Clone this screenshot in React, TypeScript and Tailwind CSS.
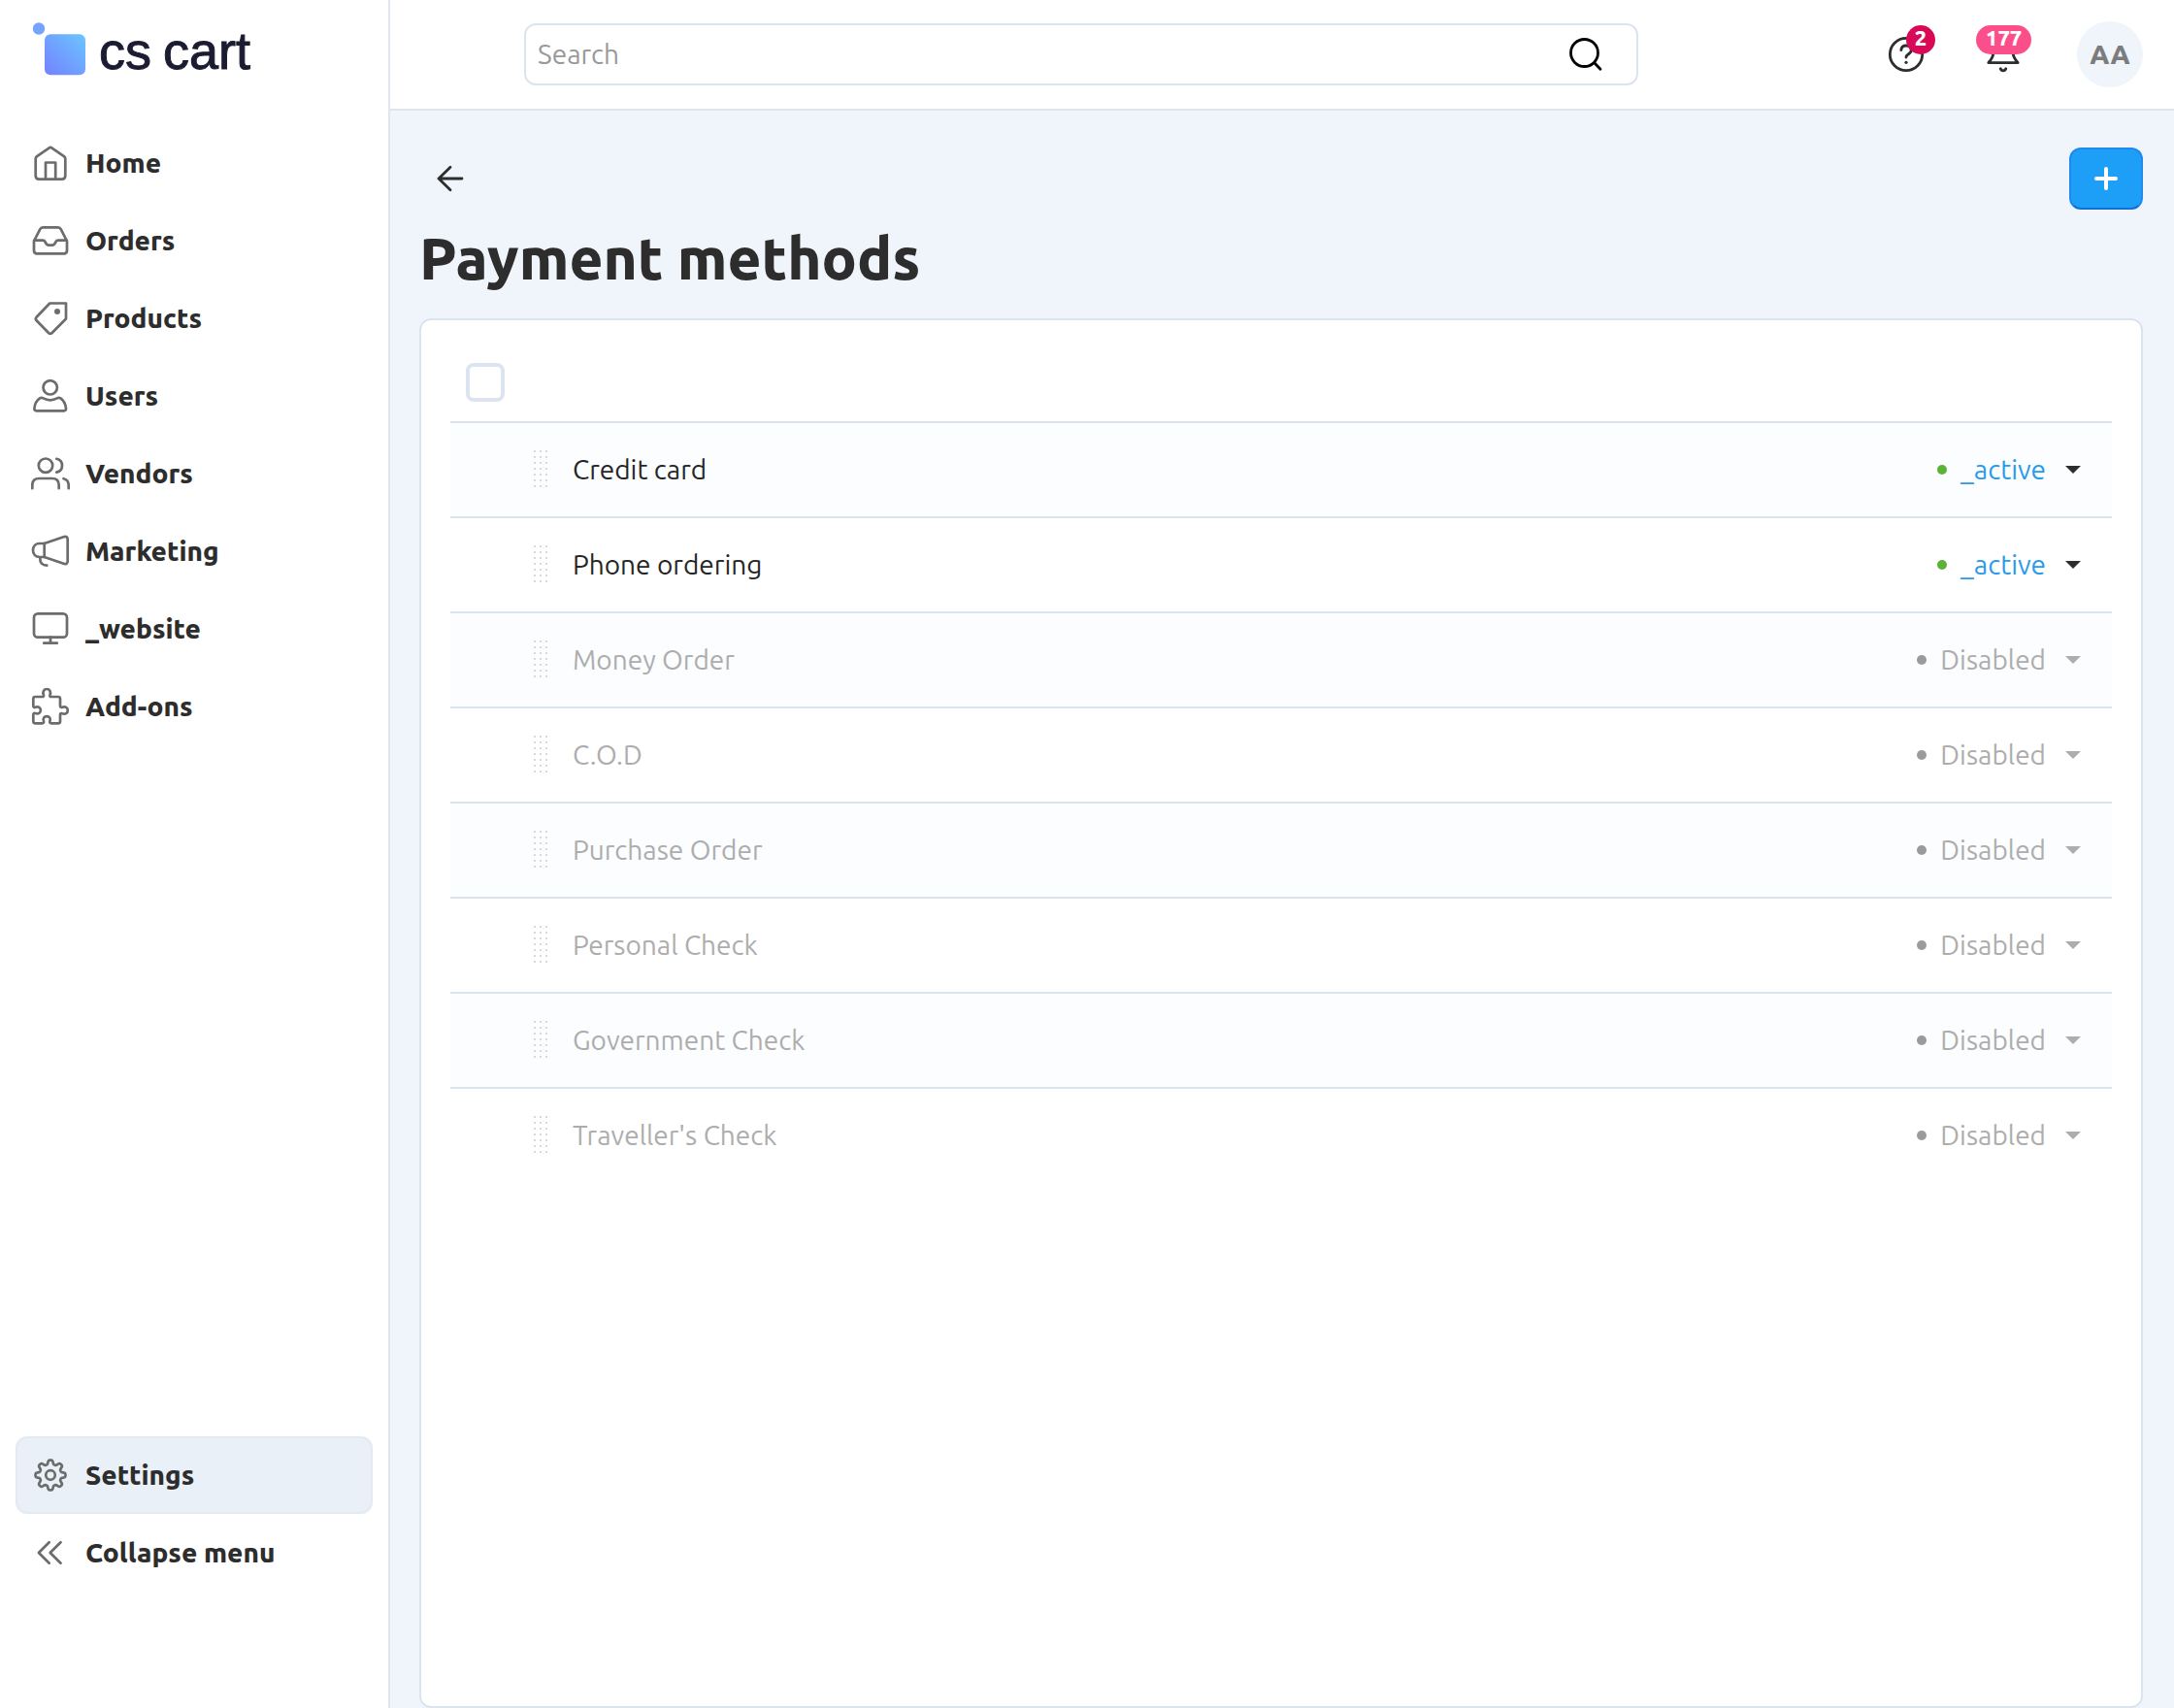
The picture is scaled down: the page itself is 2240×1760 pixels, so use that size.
import { useState } from 'react';
import type { ReactNode } from 'react';

type Status = 'active' | 'disabled';

const NAV_ITEMS = [
  { label: 'Home', icon: 'home' },
  { label: 'Orders', icon: 'orders' },
  { label: 'Products', icon: 'products' },
  { label: 'Users', icon: 'users' },
  { label: 'Vendors', icon: 'vendors' },
  { label: 'Marketing', icon: 'marketing' },
  { label: '_website', icon: 'website' },
  { label: 'Add-ons', icon: 'addons' },
];

const METHODS: { name: string; status: Status }[] = [
  { name: 'Credit card', status: 'active' },
  { name: 'Phone ordering', status: 'active' },
  { name: 'Money Order', status: 'disabled' },
  { name: 'C.O.D', status: 'disabled' },
  { name: 'Purchase Order', status: 'disabled' },
  { name: 'Personal Check', status: 'disabled' },
  { name: 'Government Check', status: 'disabled' },
  { name: "Traveller's Check", status: 'disabled' },
];

// eight rounded teeth around (20, 20)
const gearPath = () => {
  const points: string[] = [];
  for (let i = 0; i < 160; i++) {
    const a = (i / 160) * Math.PI * 2;
    const r = 13.4 + 2.1 * Math.tanh(1.8 * Math.cos(8 * a)) / Math.tanh(1.8);
    points.push(`${(20 + r * Math.cos(a)).toFixed(2)} ${(20 + r * Math.sin(a)).toFixed(2)}`);
  }
  return `M${points.join('L')}Z`;
};

const ICONS: Record<string, ReactNode> = {
  home: (
    <>
      <path d="M4.7 15.6c0-1.1.5-1.9 1.3-2.5L18.4 4.6c1-.8 2.2-.8 3.2 0L34 13.1c.8.6 1.3 1.4 1.3 2.5V33c0 2.3-1.3 3.7-3.6 3.7H8.3C6 36.7 4.7 35.3 4.7 33z" />
      <path d="M15 36.5v-17h10.2v17" />
    </>
  ),
  orders: (
    <>
      <path d="M3 20.5 9.3 8.2c.6-1.3 1.5-1.9 2.9-1.9h15.600c1.400 0 2.300.6 2.900 1.900L37 20.500v9.700c0 2-1.100 3.100-3.100 3.100H6.100c-2 0-3.100-1.100-3.100-3.100z" />
      <path d="M3.200 19.700h9c1 0 1.700.4 2.200 1.300l1.300 2.200c.6 1 1.200 1.400 2.300 1.400h4c1.100 0 1.700-.4 2.300-1.400l1.300-2.200c.5-.9 1.200-1.300 2.200-1.300h9" />
    </>
  ),
  products: (
    <>
      <path d="M19.300 4.500H36v16L21.600 35c-1.100 1-2.500 1-3.600 0L5.600 22.300c-1-1.100-1-2.400 0-3.500z" />
      <circle cx="27" cy="13" r="3" fill="currentColor" stroke="none" />
    </>
  ),
  users: (
    <>
      <circle cx="19.7" cy="11.3" r="7.2" />
      <path d="M3.400 33c.3-4.700 2.300-8.300 5.600-10.600 1.200-.7 2.300-.7 3.600 0 4.600 2.500 9.500 2.500 14.200 0 1.300-.7 2.400-.7 3.600 0 3.200 2.200 5.200 5.900 5.600 10.600.1 1.500-.6 2.300-2 2.300H5.400c-1.400 0-2.100-.8-2-2.300z" />
    </>
  ),
  vendors: (
    <>
      <circle cx="15" cy="11.7" r="7.2" />
      <path d="M1.300 35.200V32c0-4.700 2.300-7 7-7h13.400c4.700 0 7 2.300 7 7v3.200" />
      <path d="M26.300 4.800c3.600.8 5.700 3.300 5.700 6.900s-2.100 6.100-5.700 6.900M33.500 25.200c3.500.8 5.200 3.200 5.200 6.800v3.200" />
    </>
  ),
  marketing: (
    <>
      <path d="M13.700 12 33.500 5.200c2.600-.9 4.200.2 4.200 2.600v22.400c0 2.400-1.600 3.500-4.200 2.600L13.700 26H9c-4.300 0-7-2.900-7-7s2.700-7 7-7z" />
      <path d="M13.700 12v14M9.300 27.200c-.2 4.700 2.200 7.500 7 7.500" />
    </>
  ),
  website: (
    <>
      <rect x="3" y="4.3" width="34" height="24.4" rx="4" />
      <path d="M20 28.700v6M13.200 34.700h13.600" />
    </>
  ),
  addons: (
    <path d="M4.300 10h7.200c1.300 0 1.900-.9 1.400-2.100-1.300-3.400.5-5.900 3.300-5.900s4.600 2.500 3.300 5.900c-.5 1.200.1 2.100 1.400 2.100H28c1.300 0 2 .7 2 2v7.300c0 1.300.9 1.900 2.100 1.400 3.300-1.200 5.700.4 5.700 3.200s-2.400 4.500-5.700 3.300c-1.200-.5-2.100.1-2.100 1.400v6.700c0 1.300-.7 2-2 2h-7.100c-1.300 0-1.900-.8-1.500-2 1.100-3-.6-5.200-3.200-5.200s-4.300 2.200-3.200 5.200c.4 1.200-.2 2-1.500 2H4.300c-1.300 0-2-.7-2-2v-6.800c0-1.300.8-1.900 2-1.500 3.300 1.200 5.600-.5 5.600-3.200s-2.300-4.300-5.600-3.100c-1.200.4-2-.2-2-1.500V12c0-1.300.7-2 2-2z" />
  ),
  settings: (
    <>
      <path d={gearPath()} />
      <circle cx="20" cy="20" r="4.8" />
    </>
  ),
  collapse: <path d="M18.700 9.300 7.900 20l10.800 10.700M30.500 9.300 19.700 20l10.800 10.700" />,
};

function NavLink({ label, icon, active }: { label: string; icon: string; active?: boolean }) {
  return (
    <a
      href="#"
      className={`flex h-20 items-center gap-4 rounded-xl border-2 px-3.5 font-extrabold text-[#2d2d2d] ${
        active ? 'border-[#e4e9f3] bg-[#eaf0f8]' : 'border-transparent'
      }`}
    >
      <svg viewBox="0 0 40 40" fill="none" stroke="currentColor" strokeWidth="2.7" strokeLinecap="round" strokeLinejoin="round" className="size-10 shrink-0 text-[#6c6c6c]">
        {ICONS[icon]}
      </svg>
      {label}
    </a>
  );
}

function Logo() {
  return (
    <a href="#" className="ml-4 flex items-start gap-3.5">
      <svg viewBox="0 0 56 56" className="size-14">
        <defs>
          <linearGradient id="logo" x1="0" y1="1" x2="1" y2="0">
            <stop offset="0" stopColor="#7480ff" />
            <stop offset="1" stopColor="#6bc6ff" />
          </linearGradient>
        </defs>
        <circle cx="8" cy="7.5" r="6.2" fill="#76a3fd" />
        <rect x="14" y="13.3" width="42" height="42" rx="6" fill="url(#logo)" />
      </svg>
      <span className="flex gap-3 pt-0.5 font-['Liberation_Sans',sans-serif] text-[54px] leading-14 font-normal text-[#1b1b32] [-webkit-text-stroke:1px_#1b1b32]">
        <span>cs</span>
        <span>cart</span>
      </span>
    </a>
  );
}

function Grip() {
  return (
    <svg viewBox="0 0 14 40" fill="#d9d9d9" className="h-10 w-3.5">
      {[0, 6, 12, 18, 24, 30, 36].map((y) => [0, 6, 12].map((x) => <rect key={`${x}-${y}`} x={x} y={y} width="2" height="2" />))}
    </svg>
  );
}

function StatusButton({ status }: { status: Status }) {
  const active = status === 'active';
  return (
    <button type="button" aria-haspopup="menu" className="ml-auto flex items-center">
      <span className={`mr-3.5 size-2.5 rounded-full ${active ? 'bg-[#5bb236]' : 'bg-[#9b9b9b]'}`} />
      <span className={active ? 'text-[#2a9bea]' : 'text-[#adadad]'}>{active ? '_active' : 'Disabled'}</span>
      <svg viewBox="0 0 16 8" className={`ml-5 h-2 w-4 ${active ? 'text-[#2d2d2d]' : 'text-[#adadad]'}`}>
        <path d="M0 0h16L8 8z" fill="currentColor" />
      </svg>
    </button>
  );
}

export default function App() {
  const [query, setQuery] = useState('');
  const [checked, setChecked] = useState(false);

  return (
    <div className="flex min-h-screen bg-[#f0f4fb] font-['Ubuntu','Noto_Sans',sans-serif] text-[28px] leading-10 font-[450] text-[#262626]">
      <aside className="flex w-[402px] shrink-0 flex-col border-r-2 border-[#e1e5ee] bg-white px-4 pt-[22px] pb-[120px]">
        <Logo />
        <nav className="mt-12 flex flex-1 flex-col">
          {NAV_ITEMS.map((item) => (
            <NavLink key={item.label} label={item.label} icon={item.icon} />
          ))}
          <div className="mt-auto">
            <NavLink label="Settings" icon="settings" active />
            <NavLink label="Collapse menu" icon="collapse" />
          </div>
        </nav>
      </aside>

      <div className="flex min-w-0 flex-1 flex-col">
        <header className="flex h-[114px] items-center border-b-2 border-[#e1e4ea] bg-white pr-8 pl-[138px]">
          <form className="flex h-16 max-w-[1148px] flex-1 items-center rounded-xl border-2 border-[#dbe4f0] pr-8 pl-3" onSubmit={(e) => e.preventDefault()}>
            <input
              type="search"
              aria-label="Search"
              placeholder="Search"
              value={query}
              onChange={(e) => setQuery(e.target.value)}
              className="min-w-0 flex-1 bg-transparent outline-none placeholder:text-[#999]"
            />
            <button type="submit" aria-label="Submit search">
              <svg viewBox="0 0 40 40" fill="none" stroke="#000" strokeWidth="2.8" strokeLinecap="round" className="size-10">
                <circle cx="18.5" cy="18.5" r="14" />
                <path d="m28.800 28.800 6.200 6.400" />
              </svg>
            </button>
          </form>

          <div className="ml-auto flex items-center">
            <button type="button" aria-label="Help" className="relative mr-[60px] size-10">
              <svg viewBox="0 0 40 40" fill="none" stroke="#2d2d2d" strokeWidth="2.8" strokeLinecap="round" className="size-10">
                <circle cx="20" cy="20" r="16.7" />
                <path d="M14.800 15.600c.3-2.900 2.400-4.600 5.200-4.600 3 0 5.200 1.900 5.200 4.700 0 4.200-5.200 3.800-5.200 7.300" />
                <circle cx="20" cy="28.3" r="1.6" fill="#2d2d2d" stroke="none" />
              </svg>
              <span className="absolute -top-2.5 left-5 flex h-[30px] min-w-[30px] items-center justify-center rounded-full bg-[#d80a57] pb-1 text-[22px] leading-6 font-extrabold text-white">2</span>
            </button>
            <button type="button" aria-label="Notifications" className="relative mr-14 size-10">
              <svg viewBox="0 0 40 40" fill="none" stroke="#2d2d2d" strokeWidth="2.8" strokeLinecap="round" strokeLinejoin="round" className="size-10">
                <path d="M20 4c-6 0-9.500 4.200-9.500 10 0 7-1.500 10.500-5.700 14.600h30.400C31 24.500 29.500 21 29.500 14 29.500 8.200 26 4 20 4z" />
                <path d="M17.200 34.800c.5 1.300 1.500 2 2.800 2s2.300-.7 2.800-2" />
              </svg>
              <span className="absolute -top-2.5 -left-2 flex h-[30px] items-center justify-center rounded-full bg-[#fb4f8c] px-2.5 pb-1 text-[22px] leading-6 font-extrabold text-white">177</span>
            </button>
            <button type="button" aria-label="Account" className="size-17 rounded-full bg-[#f0f4fb] font-extrabold text-[#7c7c7c]">
              AA
            </button>
          </div>
        </header>

        <main className="flex flex-1 flex-col pt-[38px] pr-8 pl-[30px]">
          <div className="flex items-center justify-between">
            <button type="button" aria-label="Back" className="flex size-16 items-center justify-center">
              <svg viewBox="0 0 40 40" fill="none" stroke="#2d2d2d" strokeWidth="2.8" strokeLinecap="round" strokeLinejoin="round" className="size-10">
                <path d="M32 20H8M20 8.300 8 20l12 11.700" />
              </svg>
            </button>
            <button type="button" aria-label="Add payment method" className="flex h-16 w-19 items-center justify-center rounded-xl border-2 border-[#2089ee] border-b-[#0f70d6] bg-[#1d9ff8]">
              <svg viewBox="0 0 24 24" fill="none" stroke="#fff" strokeWidth="4" strokeLinecap="round" className="size-6">
                <path d="M12 2v20M2 12h20" />
              </svg>
            </button>
          </div>

          <h1 className="pt-[10px] pb-[22px] text-[60px] leading-20 font-extrabold text-[#2d2d2d]">Payment methods</h1>

          <section className="flex-1 rounded-xl border-2 border-[#dbe4f0] bg-white px-[30px] pt-6">
            <table className="w-full border-separate border-spacing-0">
              <thead>
                <tr className="h-20">
                  <th className="w-[86px] pl-4 text-left">
                    <input
                      type="checkbox"
                      aria-label="Select all"
                      checked={checked}
                      onChange={(e) => setChecked(e.target.checked)}
                      className="block size-10 appearance-none rounded-lg border-4 border-[#dde4f1] bg-white checked:bg-[#1d9ff8]"
                    />
                  </th>
                  <th className="w-10" />
                  <th />
                  <th />
                </tr>
              </thead>
              <tbody>
                {METHODS.map((m) => (
                  <tr key={m.name} className="h-[98px] odd:bg-[#fbfdff]">
                    <td className="border-t-2 border-[#dbe4ee]" />
                    <td className="border-t-2 border-[#dbe4ee]">
                      <Grip />
                    </td>
                    <td className={`border-t-2 border-[#dbe4ee] ${m.status === 'active' ? '' : 'text-[#adadad]'}`}>{m.name}</td>
                    <td className="border-t-2 border-[#dbe4ee] pr-8 text-right">
                      <StatusButton status={m.status} />
                    </td>
                  </tr>
                ))}
              </tbody>
            </table>
          </section>
        </main>
      </div>
    </div>
  );
}
